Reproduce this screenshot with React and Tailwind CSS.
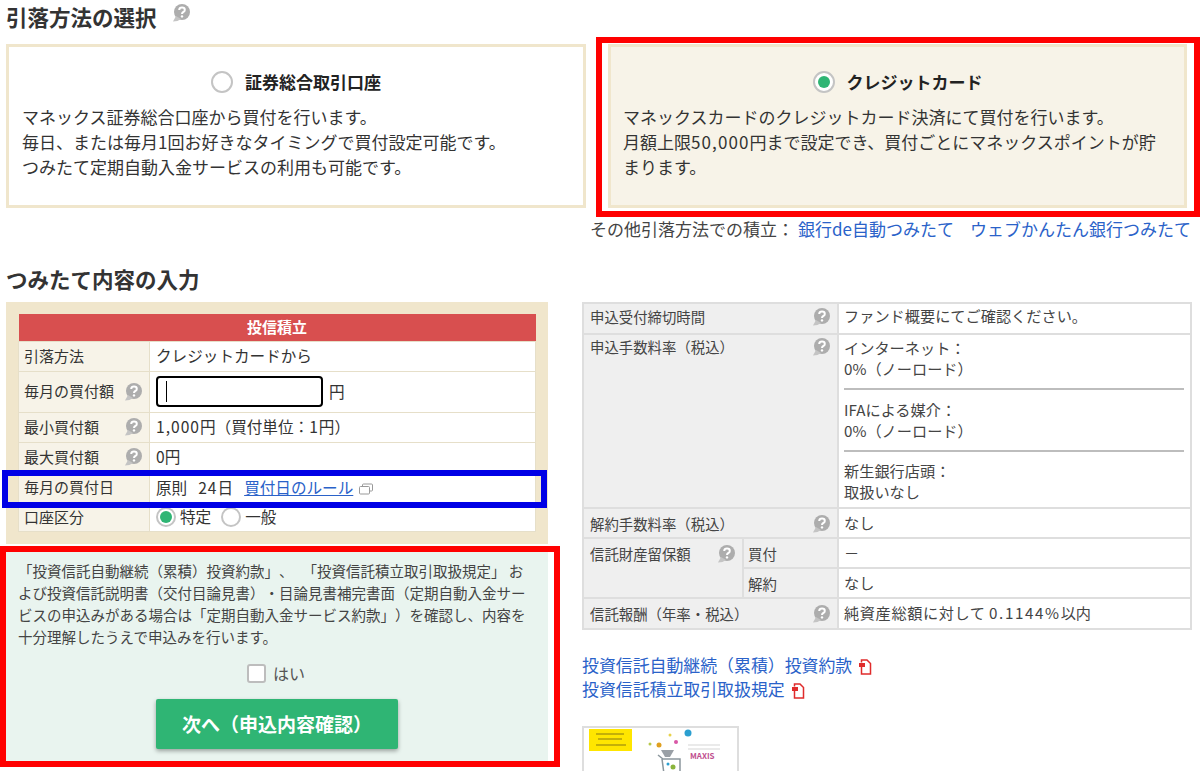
import React from "react";

const HelpIcon = ({ className = "" }) => (
  <svg viewBox="0 0 20 20" className={`w-[20px] h-[20px] shrink-0 ${className}`}>
    <circle cx="11" cy="9" r="8" fill="#adadad" />
    <path d="M5 13 L2 18.5 Q7 18.5 10 16 Z" fill="#c4c4c4" />
    <path d="M8.2 7 Q8.4 4.6 11 4.6 Q13.8 4.6 13.8 6.9 Q13.8 8.3 12.3 9 Q11 9.6 11 11" fill="none" stroke="#fff" strokeWidth="2" />
    <circle cx="11" cy="13.4" r="1.2" fill="#fff" />
  </svg>
);

const PdfIcon = () => (
  <svg viewBox="0 0 14 16" className="w-[14px] h-[16px] shrink-0 inline-block ml-[6px] align-[-3px]">
    <path d="M3.5 3.5 V1 H9 L12.5 4.5 V15 H3.5 V8" fill="none" stroke="#e02b2b" strokeWidth="1.5" />
    <path d="M1 4 H7 V8 H1 Z" fill="#e02b2b" />
  </svg>
);

const WindowIcon = () => (
  <svg viewBox="0 0 14 12" className="w-[14px] h-[12px] inline-block ml-[6px] align-[-1px]">
    <rect x="3.5" y="1" width="10" height="7" rx="1" fill="none" stroke="#999" strokeWidth="1" />
    <rect x="0.5" y="3.5" width="10" height="7.5" rx="1" fill="#fff" stroke="#999" strokeWidth="1" />
  </svg>
);

const Radio = ({ checked = false, size = "w-[22px] h-[22px]" }) => (
  <span className={`${size} rounded-full bg-white border-2 border-[#c4c4c4] flex items-center justify-center shrink-0`}>
    {checked && <span className="w-[12px] h-[12px] rounded-full bg-[#2fb574]" />}
  </span>
);

const MethodCard = ({ checked, title, children, className }) => (
  <div className={`border-[3px] border-[#f0e6cc] h-[164px] ${className}`}>
    <div className="flex items-center justify-center gap-[12px] mt-[21px] h-[28px]">
      <Radio checked={checked} />
      <span className="text-[17px] font-bold text-[#222]">{title}</span>
    </div>
    <p className="mt-[8px] text-[17px] leading-[25px] text-[#333] whitespace-nowrap">{children}</p>
  </div>
);

const Th = ({ children, help, className = "" }) => (
  <td className={`bg-[#f7f3e8] border border-[#e6dfc9] pl-[5px] pr-[6px] ${className}`}>
    <div className="flex items-center justify-between text-[15px] text-[#333]">
      <span>{children}</span>
      {help && <HelpIcon />}
    </div>
  </td>
);

const Td = ({ children }) => (
  <td className="bg-white border border-[#e6dfc9] px-[6px] text-[15.6px] text-[#333]">{children}</td>
);

const Label = ({ children, help, className = "pl-[6px] pt-[4px]", ...rest }) => (
  <td {...rest} className={`bg-[#efefef] border-2 border-[#dedede] pr-[6px] align-top ${className}`}>
    <div className="flex items-center justify-between text-[14.4px] text-[#444]">
      <span>{children}</span>
      {help && <HelpIcon />}
    </div>
  </td>
);

const Value = ({ children, className = "pt-[3px]", ...rest }) => (
  <td {...rest} className={`bg-white border-2 border-[#dedede] pl-[5px] align-top text-[15.2px] leading-[21px] text-[#444] ${className}`}>
    {children}
  </td>
);

export default function App() {
  return (
    <div
      className="relative w-[1200px] h-[771px] overflow-hidden bg-white [text-spacing-trim:space-all]"
      style={{ fontFamily: '"Noto Sans CJK JP", "Liberation Sans", sans-serif' }}
    >
      <div className="flex items-center gap-[14px] pl-[6px] h-[30px] mt-[2px]">
        <h2 className="text-[21.5px] font-bold text-[#333] leading-[30px]">引落方法の選択</h2>
        <HelpIcon className="-mt-[9px]" />
      </div>

      <div className="flex pl-[6px] mt-[12px] gap-[22px]">
        <MethodCard className="w-[580px] px-[13px]" title="証券総合取引口座">
          マネックス証券総合口座から買付を行います。<br />
          毎日、または毎月1回お好きなタイミングで買付設定可能です。<br />
          つみたて定期自動入金サービスの利用も可能です。
        </MethodCard>
        <MethodCard checked className="w-[579px] px-[12px] bg-[#f7f3e8]" title="クレジットカード">
          マネックスカードのクレジットカード決済にて買付を行います。<br />
          月額上限<span className="tracking-[1.1px]">50,000</span>円まで設定でき、買付ごとにマネックスポイントが貯<br />
          まります。
        </MethodCard>
      </div>

      <div className="flex justify-end pr-[9px] mt-[9px] text-[17px] leading-[24px] whitespace-nowrap text-[#444]">
        <span>その他引落方法での積立：</span>
        <a className="ml-[4px] text-[#2a62c9]">銀行de自動つみたて</a>
        <a className="ml-[16px] text-[#2a62c9]">ウェブかんたん銀行つみたて</a>
      </div>

      <h2 className="pl-[6px] mt-[23px] text-[21.5px] font-bold text-[#333] leading-[30px]">つみたて内容の入力</h2>

      <div className="flex pl-[6px] mt-[8px]">
        <div className="w-[542px] shrink-0">
          <div className="bg-[#f0e6cc] h-[242px] px-[12px] pt-[12px]">
            <table className="w-full table-fixed border-collapse">
              <colgroup>
                <col className="w-[131px]" />
                <col />
              </colgroup>
              <tbody>
                <tr className="h-[27px]">
                  <td colSpan={2} className="bg-[#d84f4f] text-center text-[15px] font-bold text-white">投信積立</td>
                </tr>
                <tr className="h-[30px]">
                  <Th>引落方法</Th>
                  <Td>クレジットカードから</Td>
                </tr>
                <tr className="h-[41px]">
                  <Th help>毎月の買付額</Th>
                  <Td>
                    <div className="flex items-center gap-[6px]">
                      <div className="w-[167px] h-[31px] border-2 border-black rounded-[4px] flex items-center pl-[8px]">
                        <span className="w-px h-[21px] bg-black" />
                      </div>
                      <span>円</span>
                    </div>
                  </Td>
                </tr>
                <tr className="h-[30px]">
                  <Th help>最小買付額</Th>
                  <Td><span className="tracking-[1px]">1,000</span>円（買付単位：<span className="tracking-[1px]">1</span>円）</Td>
                </tr>
                <tr className="h-[30px]">
                  <Th help>最大買付額</Th>
                  <Td>0円</Td>
                </tr>
                <tr className="h-[31px]">
                  <Th>毎月の買付日</Th>
                  <Td>
                    <span>原則</span>
                    <span className="ml-[11px] tracking-[1px]">24</span>
                    <span>日</span>
                    <a className="ml-[11px] text-[#2a62c9] underline">買付日のルール</a>
                    <WindowIcon />
                  </Td>
                </tr>
                <tr className="h-[28px]">
                  <Th>口座区分</Th>
                  <Td>
                    <div className="flex items-center gap-[4px]">
                      <Radio checked size="w-[20px] h-[20px]" />
                      <span>特定</span>
                      <span className="ml-[6px]"><Radio size="w-[20px] h-[20px]" /></span>
                      <span>一般</span>
                    </div>
                  </Td>
                </tr>
              </tbody>
            </table>
          </div>
          <div className="bg-[#e9f4ef] mt-[7px] h-[214px] pl-[12px] pt-[9px]">
            <p className="text-[14.5px] leading-[22px] text-[#444] whitespace-nowrap">
              「投資信託自動継続（累積）投資約款」、<span className="ml-[9px]">「投資信託積立取引取扱規定」 お</span><br />
              よび投資信託説明書（交付目論見書）・目論見書補完書面（定期自動入金サー<br />
              ビスの申込みがある場合は「定期自動入金サービス約款」）を確認し、内容を<br />
              十分理解したうえで申込みを行います。
            </p>
            <div className="flex items-center justify-center gap-[7px] mt-[13px] text-[16px] text-[#555] pr-[14px]">
              <span className="w-[19px] h-[19px] rounded-[3px] bg-white border-2 border-[#bdbdbd]" />
              <span>はい</span>
            </div>
            <button className="block w-[242px] h-[50px] ml-[138px] mt-[14px] rounded-[2px] bg-[#2fb574] text-white font-bold text-[19px] shadow-[0_2px_4px_rgba(0,0,0,0.35)]">
              次へ（申込内容確認）
            </button>
          </div>
        </div>

        <div className="ml-[34px] w-[610px] shrink-0">
          <table className="w-full table-fixed border-collapse">
            <colgroup>
              <col className="w-[160px]" />
              <col className="w-[95px]" />
              <col />
            </colgroup>
            <tbody>
              <tr className="h-[31px]">
                <Label colSpan={2} help className="pl-[6px] pt-[2px]">申込受付締切時間</Label>
                <Value className="pt-[1px]">ファンド概要にてご確認ください。</Value>
              </tr>
              <tr className="h-[174px]">
                <Label colSpan={2} help className="pl-[6px] pt-[1px]">申込手数料率（税込）</Label>
                <Value className="pt-[2px]">
                  <div className="pr-[6px]">
                    <div className="pb-[9px] border-b-2 border-[#bdbdbd]">インターネット：<br />0%（ノーロード）</div>
                    <div className="py-[9px] border-b-2 border-[#bdbdbd]">IFAによる媒介：<br />0%（ノーロード）</div>
                    <div className="pt-[8px]">新生銀行店頭：<br />取扱いなし</div>
                  </div>
                </Value>
              </tr>
              <tr className="h-[30px]">
                <Label colSpan={2} help>解約手数料率（税込）</Label>
                <Value>なし</Value>
              </tr>
              <tr className="h-[30px]">
                <Label rowSpan={2} help>信託財産留保額</Label>
                <Label className="pl-[4px] pt-[4px]">買付</Label>
                <Value>－</Value>
              </tr>
              <tr className="h-[30px]">
                <Label className="pl-[4px] pt-[4px]">解約</Label>
                <Value>なし</Value>
              </tr>
              <tr className="h-[31px]">
                <Label colSpan={2} help>信託報酬（年率・税込）</Label>
                <Value>
                  <span className="tracking-[0.6px]">純資産総額に対して</span> <span className="tracking-[1.6px]">0.1144%</span>以内
                </Value>
              </tr>
            </tbody>
          </table>

          <div className="mt-[23px] text-[16.9px] leading-[24px] text-[#2a62c9] whitespace-nowrap">
            <div>投資信託自動継続（累積）投資約款<PdfIcon /></div>
            <div>投資信託積立取引取扱規定<PdfIcon /></div>
          </div>

          <div className="mt-[25px] w-[157px] h-[80px] border-2 border-[#dedede] bg-white">
            <svg viewBox="0 0 153 60" className="w-[153px] h-[60px] block">
              <rect x="5" y="1" width="43" height="22" fill="#ffe600" />
              <path d="M12 6 H40 M14 11 H38 M12 17 H42" stroke="#8a7a10" strokeWidth="1.2" />
              <circle cx="104" cy="5" r="3.5" fill="#2b9fd0" />
              <circle cx="86" cy="7" r="1.5" fill="#e8d24a" />
              <circle cx="92" cy="14" r="2" fill="#d957a6" />
              <circle cx="75" cy="17" r="2.5" fill="#e0a020" />
              <circle cx="66" cy="16" r="1.5" fill="#b7c84a" />
              <path d="M77 22 H90 L86 29 H81 Z" fill="#9aa0a6" />
              <path d="M74 27 L79 31 H96 V46 H80 L78 31 M81 49 h3 M92 49 h3" fill="none" stroke="#8c979d" strokeWidth="1.5" />
              <circle cx="84" cy="36" r="1.5" fill="#2b9fd0" />
              <circle cx="89" cy="39" r="2.5" fill="#8ab43c" />
              <path d="M104 17 H136 M104 21 H136" stroke="#d5d5d5" strokeWidth="1" />
            </svg>
          </div>
        </div>
      </div>

      {/* annotation boxes drawn over the page */}
      <div className="absolute left-[596px] top-[37px] w-[604px] h-[180px] border-[6px] border-[#ff0000] pointer-events-none" />
      <div className="absolute left-[2px] top-[470px] w-[545px] h-[38px] border-[6px] border-[#0000e6] pointer-events-none" />
      <div className="absolute left-0 top-[546px] w-[560px] h-[221px] border-[6px] border-[#ff0000] pointer-events-none" />
      <span className="absolute left-[690px] top-[751px] text-[8px] leading-[10px] font-bold text-[#c0508f]">MAXIS</span>
    </div>
  );
}
